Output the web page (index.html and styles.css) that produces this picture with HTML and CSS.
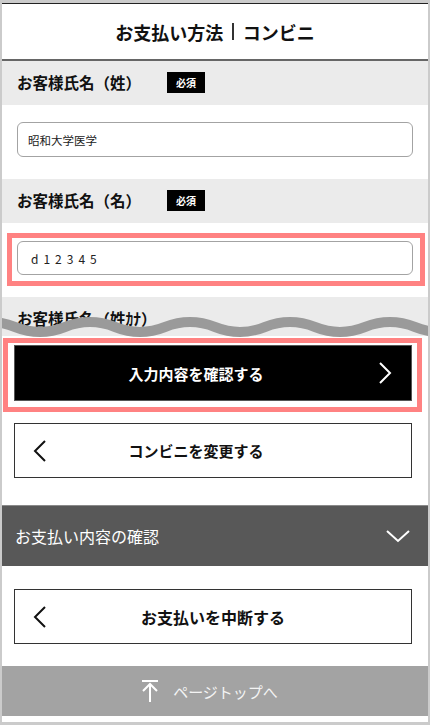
FILE: index.html
```html
<!DOCTYPE html>
<html lang="ja">
<head>
    <meta charset="UTF-8">
    <meta name="viewport" content="width=device-width, initial-scale=1.0">
    <link rel="stylesheet" href="styles.css">
    <title>お支払い方法｜コンビニ</title>
</head>
<body>

<div class="frame">
  <div class="screen">

    <header class="head">
      <h1 class="title">お支払い方法<span class="sep"></span>コンビニ</h1>
    </header>

    <div class="label-row">
      <span class="label">お客様氏名（姓）</span>
      <span class="badge">必須</span>
    </div>
    <div class="field">
      <div class="input">昭和大学医学</div>
    </div>

    <div class="label-row">
      <span class="label">お客様氏名（名）</span>
      <span class="badge">必須</span>
    </div>
    <div class="field field-mark">
      <div class="mark-wrap">
        <div class="input input-spaced">d12345</div>
        <span class="mark mark-input"></span>
      </div>
    </div>

    <div class="label-row label-cut">
      <span class="label">お客様氏名（姓ｶﾅ）</span>
      <svg class="wave" width="426" height="44" viewBox="0 0 426 44">
        <path d="M -37 30 Q -12 20 13 30 T 63 30 T 113 30 T 163 30 T 213 30 T 263 30 T 313 30 T 363 30 T 413 30 T 463 30" fill="none" stroke="#9a9a9a" stroke-width="10"/>
      </svg>
    </div>

    <div class="actions actions-top">
      <div class="mark-wrap">
        <a class="btn btn-dark">
          <span></span>
          <span class="btn-text btn-text-left">入力内容を確認する</span>
          <svg class="chev chev-right" width="14" height="22" viewBox="0 0 14 22">
            <path d="M2 1 L12 11 L2 21" fill="none" stroke="#fff" stroke-width="2"/>
          </svg>
        </a>
        <span class="mark mark-btn"></span>
      </div>
      <a class="btn btn-line">
        <svg class="chev chev-left" width="14" height="22" viewBox="0 0 14 22">
          <path d="M12 1 L2 11 L12 21" fill="none" stroke="#111" stroke-width="2"/>
        </svg>
        <span class="btn-text btn-text-left">コンビニを変更する</span>
        <span></span>
      </a>
    </div>

    <div class="accordion">
      <span>お支払い内容の確認</span>
      <svg width="24" height="14" viewBox="0 0 24 14">
        <path d="M1 2 L12 12 L23 2" fill="none" stroke="#fff" stroke-width="2"/>
      </svg>
    </div>

    <div class="actions actions-bottom">
      <a class="btn btn-line">
        <svg class="chev chev-left" width="14" height="22" viewBox="0 0 14 22">
          <path d="M12 1 L2 11 L12 21" fill="none" stroke="#111" stroke-width="2"/>
        </svg>
        <span class="btn-text btn-text-big">お支払いを中断する</span>
        <span></span>
      </a>
    </div>

    <div class="pagetop">
      <svg width="16" height="22" viewBox="0 0 16 22">
        <path d="M0 1 H16 M8 4 V22 M1 11 L8 4 L15 11" fill="none" stroke="#fff" stroke-width="2"/>
      </svg>
      <span>ページトップへ</span>
    </div>

  </div>
</div>

</body>
</html>
```
FILE: styles.css
```css
*{
    margin: 0;
    padding: 0;
    box-sizing: border-box;
}
html, body{
    height: 100%;
}
body{
    font-family: "Noto Sans CJK JP", "Noto Sans", sans-serif;
    color: #111;
    background: #cbcbcb;
}

.frame{
    height: 725px;
    padding: 3px 2px 3px 2px;
    background: #cbcbcb;
}
.screen{
    height: 100%;
    background: #fff;
    border-top: 1px solid #222;
    overflow: hidden;
}

/* header */
.head{
    height: 57px;
    border-bottom: 2px solid #666;
    display: flex;
    align-items: center;
    justify-content: center;
}
.title{
    font-size: 18px;
    font-weight: bold;
    line-height: 1;
    display: flex;
    align-items: center;
}
.sep{
    display: inline-block;
    width: 1.5px;
    height: 17px;
    background: #333;
    margin: 0 9px;
}

/* form */
.label-row{
    height: 44px;
    padding: 11px 15px 0;
    background: #ebebeb;
    display: flex;
    align-items: flex-start;
    gap: 26px;
}
.label{
    font-size: 15.5px;
    font-weight: bold;
    line-height: 21px;
}
.badge{
    width: 38px;
    height: 21px;
    background: #000;
    color: #fff;
    font-size: 10px;
    font-weight: bold;
    display: flex;
    align-items: center;
    justify-content: center;
}
.label-cut{
    height: 39px;
    position: relative;
    overflow: visible;
}
.wave{
    position: absolute;
    left: 0;
    top: 0;
}

.field{
    height: 74px;
    padding: 17px 15px 0;
}
.field-mark{
    padding-top: 18px;
}
.input{
    height: 35px;
    border: 1px solid #a3a3a3;
    border-radius: 6px;
    background: #fff;
    padding-left: 10px;
    font-size: 11.5px;
    color: #222;
    display: flex;
    align-items: center;
}
.input-spaced{
    height: 34px;
    padding-left: 13px;
    font-size: 12px;
    letter-spacing: 5px;
}

/* red highlight marks */
.mark-wrap{
    position: relative;
}
.mark{
    position: absolute;
    border: 5px solid #ff8282;
    pointer-events: none;
}
.mark-input{
    left: -10px;
    right: -12px;
    top: -8px;
    bottom: -11px;
}
.mark-btn{
    left: -11px;
    right: -10px;
    top: -7px;
    bottom: -11px;
}

/* buttons */
.actions{
    padding: 0 16px 0 12px;
    display: flex;
    flex-direction: column;
}
.actions-top{
    padding-top: 9px;
    padding-bottom: 27px;
    gap: 22px;
}
.actions-bottom{
    padding-top: 23px;
    padding-bottom: 22px;
}
.btn{
    height: 55px;
    display: grid;
    grid-template-columns: 46px 1fr 46px;
    align-items: center;
    text-decoration: none;
}
.btn-dark{
    height: 56px;
    background: #000;
    border: 1px solid #555;
    color: #fff;
}
.btn-line{
    background: #fff;
    border: 1px solid #333;
    color: #111;
}
.btn-text{
    text-align: center;
    font-size: 15px;
    font-weight: bold;
}
.btn-text-left{
    padding-right: 34px;
}
.btn-text-big{
    font-size: 16px;
}
.chev{
    display: block;
}
.chev-right{
    margin-left: 13px;
}
.chev-left{
    margin-left: 18px;
}

/* accordion */
.accordion{
    height: 61px;
    background: #585858;
    border-top: 1px solid #8a8a8a;
    color: #fff;
    font-size: 16px;
    padding: 0 18px 0 13px;
    display: flex;
    align-items: center;
    justify-content: space-between;
}

/* page top */
.pagetop{
    height: 50px;
    background: #a3a3a3;
    color: #f4f4f4;
    font-size: 15px;
    display: flex;
    align-items: center;
    justify-content: center;
    gap: 15px;
    padding-right: 10px;
}
```
